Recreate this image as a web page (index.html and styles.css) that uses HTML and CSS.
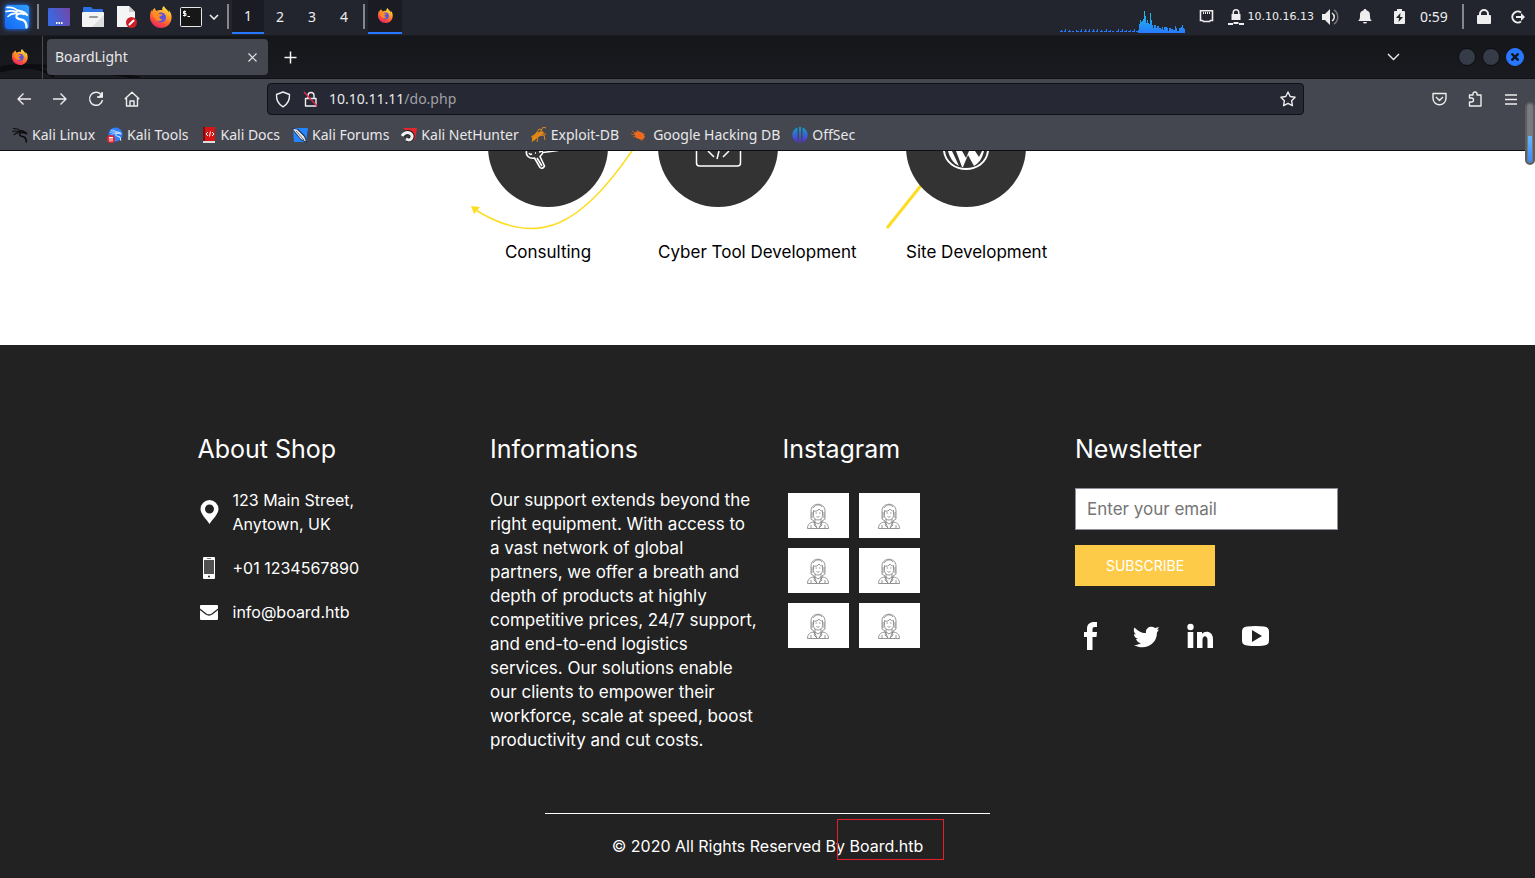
FILE: index.html
```html
<!DOCTYPE html>
<html lang="en">
<head>
<meta charset="utf-8">
<title>BoardLight</title>
<link rel="stylesheet" href="styles.css">
</head>
<body>
<svg class="defs" aria-hidden="true">
  <defs>
    <linearGradient id="fox" x1="0.8" y1="0" x2="0.3" y2="1"><stop offset="0" stop-color="#fff04a"/><stop offset="0.4" stop-color="#ff9a2a"/><stop offset="0.75" stop-color="#ff4a3d"/><stop offset="1" stop-color="#e0246b"/></linearGradient>
    <linearGradient id="blueSquare" x1="0" y1="1" x2="1" y2="0"><stop offset="0" stop-color="#1467f5"/><stop offset="1" stop-color="#2ea0ff"/></linearGradient>
    <linearGradient id="desk" x1="0" y1="0.3" x2="1" y2="0"><stop offset="0" stop-color="#3a68e0"/><stop offset="1" stop-color="#7446a8"/></linearGradient>
    <linearGradient id="load" x1="0" y1="0" x2="0" y2="1"><stop offset="0" stop-color="#1fc4e8"/><stop offset="1" stop-color="#2777ff"/></linearGradient>
    <linearGradient id="off" x1="0" y1="0" x2="0" y2="1"><stop offset="0" stop-color="#12a0c8"/><stop offset="1" stop-color="#5a2bd8"/></linearGradient>
    <symbol id="firefox" viewBox="0 0 22 22">
      <path fill="url(#fox)" d="M14 0c-1.800 1.500-2 3-1.700 4.200C10 3.600 8 4 6.800 5 5.500 4.200 5 3.200 5 2 3.300 2.800 2.400 4 2.200 5.500 1.600 5 1.500 4.500 1.600 3.800.500 6 0 8.500 0 11c0 6 5 11 11 11s10.600-4.700 10.600-10.800c0-3-1-5.200-3-7 .200 1 .100 1.800 0 2.300C17.500 3 14.500 2.500 14 0z"/>
      <circle cx="11" cy="11.500" r="5" fill="#5b55dc"/>
      <path fill="#ff8a24" d="M2.500 8c2-2 5-2 7 0l3 .500c-.600 1.500-2.500 1.500-3 2-.500 1 .500 3 3 2.800-2 2.700-6 2-7.500-.500C3.800 11 3 10 2.500 8z"/>
    </symbol>
    <symbol id="dragon" viewBox="0 0 24 24">
      <g fill="none" stroke="currentColor" stroke-linecap="round" stroke-linejoin="round">
        <path stroke-width="1.600" d="M2 2.500c4-.500 8 .500 11 3.500M1 6.500c4-1 7-1 11 .500M3 11.500c2.500-2.500 5-3.500 9-3"/>
        <path stroke-width="2.200" d="M13 5.500l4 1 3 1.500 2 2M19 9c-4-1.500-8 0-7.500 3 .500 2.500 4 2 6.500 3 2.500 1.200 3.500 4 3.500 7.500"/>
      </g>
    </symbol>
    <symbol id="person" viewBox="0 0 22 26">
      <g fill="none" stroke="#888" stroke-width="0.900">
        <path d="M4 16V8c0-9 14-9 14 0v8l-3 2v2M4 16l3 2v2M6.500 7.500v5c0 6 9 6 9 0v-5M6 8c3 .500 5 0 6-2 1 1.500 2 2 4 2M6 5c3-4 7-4 9-1M5 9v6M17 9v6M8.500 10h1.500M12 10h1.500M9.500 13.500c1 .800 2 .800 3 0M8 16v3l3 2 3-2v-3M.500 25.500c0-4 2.500-6.500 7-6.500l2.500 6.500M21.500 25.500c0-4-2.500-6.500-7-6.500L12 25.500M.500 25.500h21M4 25v-3M18 25v-3M8 19l-1 3 3 3M14 19l1 3-3 3"/>
      </g>
    </symbol>
  </defs>
</svg>

<header class="panel">
  <div class="panel-group">
    <button class="slot" aria-label="Applications"><svg class="menu-logo" width="24" height="24" viewBox="0 0 24 24"><rect width="24" height="24" rx="2" fill="url(#blueSquare)"/><use href="#dragon" width="24" height="24" color="#fff"/></svg></button>
    <span class="sep"></span>
    <button class="slot" aria-label="Show desktop"><svg width="22" height="18"><rect width="22" height="18" rx="1" fill="url(#desk)"/><path stroke="#fff" stroke-width="2" d="M8 15h1.500M10.500 15h1.500M13 15h1.500"/></svg></button>
    <button class="slot" aria-label="Files"><svg width="22" height="20"><path fill="#2b6fe0" d="M1 1q0-1 1-1h7l2 2h9q1 0 1 1v4H1z"/><rect y="5" width="22" height="15" rx="1" fill="#f4f4f4"/><path fill="#dedede" d="M22 8v12H10z"/><path stroke="#999" stroke-width="2" stroke-linecap="round" d="M8 10h7"/></svg></button>
    <button class="slot" aria-label="Text editor"><svg width="20" height="22"><path fill="#f5f5f5" d="M0 0h12l6 6v15H0z"/><path fill="#ccc" d="M12 0v6h6z"/><circle cx="14.500" cy="16.500" r="5.500" fill="#cf1f26"/><path stroke="#fff" stroke-width="2" stroke-linecap="round" d="M12.500 18.500l4-4"/></svg></button>
    <button class="slot" aria-label="Firefox"><svg width="22" height="22"><use href="#firefox"/></svg></button>
    <button class="slot terminal" aria-label="Terminal"><svg width="22" height="20"><rect x="0.500" y="0.500" width="21" height="19" rx="1" fill="#171717" stroke="#e8e8e8"/><path fill="none" stroke="#fff" d="M6 4.500H3.500v2H6v2H3M4.700 3.500v6M7.500 9.500H10"/></svg></button>
    <button class="slot more" aria-label="More terminals"><svg width="10" height="6"><path fill="none" stroke="#eee" stroke-width="1.600" d="M1 1l4 4 4-4"/></svg></button>
    <span class="sep"></span>
    <button class="workspace current">1</button><button class="workspace">2</button><button class="workspace">3</button><button class="workspace">4</button>
    <span class="sep"></span>
    <button class="slot current" aria-label="BoardLight window"><svg width="15" height="15"><use href="#firefox"/></svg></button>
  </div>
  <div class="panel-group">
    <svg class="load" width="125" height="22" viewBox="0 0 125 22"><path stroke="#2777ff" stroke-dasharray="3 1 2 2" d="M0 20.500h78"/><path stroke="#2777ff" d="M1.500 21v-2M5.500 21v-3M9.500 21v-2M16.500 21v-2M21.500 21v-3M25.500 21v-3M29.500 21v-3M33.500 21v-3M37.500 21v-3M41.500 21v-2M46.500 21v-3M50.500 21v-2M58.500 21v-3M62.500 21v-3M66.500 21v-2M70.500 21v-2M74.500 21v-3"/><path fill="url(#load)" d="M78 22v-3h1v-6h1V9h1v2h1v-1h1V8h1V0h1v5h1v7h1V9h1v3h1v1h1V2h1v7h1v5h1v3h1v-3h2v3h1v-2h2v2h2v1h1v-2h1v3h1v-3h3v1h1v3h1v-3h2v1h2v1h2v-4h1v2h1v3h2v-3h2v-1h1v-2h1v3h1v1h1v2h2v-4h1v3h2v4z"/></svg>
    <button class="slot" aria-label="Network"><svg width="15" height="13"><path fill="none" stroke="#eee" stroke-width="1.600" d="M1.500.800h12v9.700h-2l-1 1h-6l-1-1h-2z"/><path stroke="#eee" d="M4.500 2v2M6.500 2v2M8.500 2v2M10.500 2v2"/></svg></button>
    <button class="vpn" aria-label="VPN"><svg width="16" height="16"><path fill="#eee" d="M3.500 5h1V3.500a3.500 3.500 0 0 1 7 0V5h1v6h-9z"/><path fill="#23252e" d="M6 5h4V3.500a2 2 0 0 0-4 0z"/><path stroke="#eee" stroke-width="2" d="M0 15h5M5.500 14h5M11 15h5"/></svg></button>
    <span class="ip">10.10.16.13</span>
    <button class="slot" aria-label="Volume"><svg width="18" height="16"><path fill="#eee" d="M0 5h3l5-5v16l-5-5H0z"/><path fill="none" stroke="#eee" stroke-width="1.500" d="M10 4c3 2 3 6 0 8"/><path fill="none" stroke="#777" stroke-width="1.500" d="M12 1c5 3 5 11 0 14"/></svg></button>
    <button class="slot" aria-label="Notifications"><svg width="14" height="15"><path fill="#eee" d="M7 0c1 0 1.500.600 1.500 1.500C11.500 2 12 4 12 7c0 2.500.500 4 2 5H0c1.500-1 2-2.500 2-5 0-3 .500-5 3.500-5.500C5.500.600 6 0 7 0zM5 13h4q0 1.500-2 1.500T5 13z"/></svg></button>
    <button class="slot" aria-label="Battery"><svg width="11" height="15"><path fill="#eee" d="M3 0h5v2h2q1 0 1 1v11q0 1-1 1H1q-1 0-1-1V3q0-1 1-1h2z"/><path fill="#23252e" d="M6.500 4L2 9h3l-.500 4L9 8H6z"/></svg></button>
    <time class="clock">0:59</time>
    <span class="sep"></span>
    <button class="slot" aria-label="Lock screen"><svg width="14" height="15"><path fill="#eee" d="M1 6h1V5a5 5 0 0 1 10 0v1h1q1 0 1 1v7q0 1-1 1H1q-1 0-1-1V7q0-1 1-1z"/><path fill="#23252e" d="M4 6h6V5a3 3 0 0 0-6 0z"/></svg></button>
    <button class="slot" aria-label="Log out"><svg width="16" height="14"><path fill="none" stroke="#eee" stroke-width="2" d="M11 2.500a5.500 5.500 0 1 0 0 9M6 7h6"/><path fill="#eee" d="M11 3l4 4-4 4z"/></svg></button>
  </div>
</header>

<section class="browser">
  <div class="tabs">
    <svg class="wallpaper" width="140" height="15" viewBox="0 0 140 15"><path fill="none" stroke="#0c0d10" stroke-width="3" d="M0 8Q35-2 54 14M0 5Q30-3 140 15"/></svg>
    <button class="view" aria-label="Firefox View"><svg width="16" height="16"><use href="#firefox"/></svg></button>
    <div class="tab"><span>BoardLight</span><button aria-label="Close tab"><svg width="9" height="9"><path stroke="#e5e5e8" stroke-width="1.200" d="M.500.500l8 8M8.500.500l-8 8"/></svg></button></div>
    <button class="new-tab" aria-label="New tab"><svg width="13" height="13"><path stroke="#f3f3f3" stroke-width="1.500" d="M6.500.500v12M.500 6.500h12"/></svg></button>
    <button class="all-tabs" aria-label="List all tabs"><svg width="13" height="8"><path fill="none" stroke="#eee" stroke-width="1.400" d="M1 1l5.500 5.500L12 1"/></svg></button>
    <div class="window-buttons">
      <button aria-label="Minimize"></button><button aria-label="Maximize"></button>
      <button class="close" aria-label="Close"><svg width="8" height="8"><path stroke="#101522" stroke-width="2.400" d="M.500.500l7 7M7.500.500l-7 7"/></svg></button>
    </div>
  </div>
  <nav class="toolbar">
    <button class="tool" aria-label="Back"><svg width="16" height="14"><path d="M15 7H2M7.500 1.500L2 7l5.500 5.500"/></svg></button>
    <button class="tool" aria-label="Forward"><svg width="16" height="14"><path d="M1 7h13M8.500 1.500L14 7l-5.500 5.500"/></svg></button>
    <button class="tool" aria-label="Reload"><svg width="16" height="16"><path d="M13 3.500A6.500 6.500 0 1 0 14.500 9M14 1v5H9"/><path class="solid" d="M15 1v5.500H9.500z"/></svg></button>
    <button class="tool" aria-label="Home"><svg width="16" height="16"><path d="M.800 8L8 1.200 15.200 8M2.500 7v8h11V7M6 15v-5h4v5"/></svg></button>
    <div class="url">
      <svg width="16" height="17"><path d="M8 1l6.500 2.500c.300 6-1.500 9.500-6.500 12.300C3 13 1.200 9.500 1.500 3.500z"/></svg>
      <svg width="16" height="16"><path d="M2.500 7.500h10.500V15H2.500zM5 7V4.500a3 3 0 0 1 6 0V7"/><path class="strike" d="M1 1l13 14"/></svg>
      <label for="address">10.10.11.11</label><input id="address" value="/do.php">
      <button aria-label="Bookmark this page"><svg width="16" height="16"><path d="M8 1l2.200 4.500 4.900.700-3.500 3.500.800 4.900L8 12.300l-4.400 2.300.800-4.900L.900 6.200l4.900-.700z"/></svg></button>
    </div>
    <button class="tool" aria-label="Save to Pocket"><svg width="15" height="14"><path d="M1 1.500h13V6c0 9-13 9-13 0zM4 5l3.500 3.500L11 5"/></svg></button>
    <button class="tool" aria-label="Extensions"><svg width="15" height="16"><path d="M5 4V3a2 2 0 0 1 4 0v1h4v11H1.500v-4h2a1.500 1.500 0 0 0 0-4h-2V4z"/></svg></button>
    <button class="tool" aria-label="Menu"><svg width="12" height="11"><path d="M0 1h12M0 5.500h12M0 10h12"/></svg></button>
  </nav>
  <nav class="bookmarks">
    <a href="#"><svg width="16" height="16"><use href="#dragon" color="#0b0b0c"/></svg>Kali Linux</a>
    <a href="#"><svg width="16" height="16"><circle cx="8.500" cy="7.500" r="7" fill="#2f7fff"/><use href="#dragon" x="3" y="2" width="12" height="12" color="#cfe4ff"/><circle cx="4" cy="12" r="4" fill="#e3262f"/><path stroke="#fff" d="M2 10.500h4M3 10.500v4M5 10.500v4"/></svg>Kali Tools</a>
    <a href="#"><svg width="16" height="16"><path fill="#ddd" d="M2 14h12v2H2z"/><path fill="#d81414" d="M2 0h12v14H2z"/><path fill="#7c0d12" d="M2 0h2v14H2z"/><path fill="none" stroke="#fff" d="M7 5L5 7l2 2M11 5l2 2-2 2M9.500 4.500l-1 5"/></svg>Kali Docs</a>
    <a href="#"><svg width="16" height="16"><path fill="#2585ff" d="M1 1h15l-2 14H2z"/><path fill="#16233d" d="M0 1l6 1 7 7 2 7-6-3-6-7z"/><path fill="#f1f1f1" d="M1 2l4 .500 7 7 2 5-5-2.500-5-6z"/><path stroke="#444" stroke-width=".800" d="M4 4l8 9"/></svg>Kali Forums</a>
    <a href="#"><svg width="16" height="16"><path fill="#e5262c" d="M2 1h14l-2 12z"/><path fill="none" stroke="#222" stroke-width="5" d="M2 9c4-6 10-3 9 1-1 3-3 3-5 2"/><path fill="none" stroke="#f3f3f3" stroke-width="3" d="M1 9c4-6 11-3 10 1-1 4-4 3-6 2"/></svg>Kali NetHunter</a>
    <a href="#"><svg width="16" height="16"><path fill="#e18718" d="M1 10l4-4 5-2 3 1-2 3-4 2-4 4-2-1z"/><path fill="none" stroke="#e18718" d="M1 15l3-7 4-6 3 1M6 15l1-6 6-1 1 5M8 7l7 0M10 4l2-4 3 1M3 8L0 10"/></svg>Exploit-DB</a>
    <a href="#" class="wide"><svg width="16" height="16"><path fill="#ed6a1e" d="M3 6l4-2 5 2 2 4-3 3-6-2z"/><path stroke="#ed6a1e" stroke-width=".700" d="M1 4l12 8M2 10l12-3M6 3l5 11M0 7l12 2"/></svg>Google Hacking DB</a>
    <a href="#"><svg width="16" height="16"><path fill="url(#off)" d="M5.500.500v15C-1.500 13-1.500 3 5.500.500zM7 0h2v16H7zM10.500.500v15c7-2.500 7-12.500 0-15z"/></svg>OffSec</a>
  </nav>
  <div class="scrollbar"></div>
</section>

<main class="services">
  <article>
    <svg width="120" height="56" viewBox="0 64 120 56"><circle cx="60" cy="60" r="60" fill="#333"/><path fill="none" stroke="#ffdc24" stroke-width="1.500" d="M144 64C94 136 52 164-14 122"/><path fill="#ffdc24" d="M-17 119l9 1-6 7z"/><path fill="none" stroke="#fff" stroke-width="1.600" stroke-linejoin="round" d="M38.500 64c-1 5 3 8 8 7l5.500 9.500q2.500 2 4.500-1.500l-4.500-9.500q2-2 3-4l15-2M41 66q1 2 3 1M47 66h1M51 65l4-1M49 71l5 8"/></svg>
    <h3>Consulting</h3>
  </article>
  <article>
    <svg width="120" height="56" viewBox="0 64 120 56"><circle cx="60" cy="60" r="60" fill="#333"/><path fill="none" stroke="#fff" stroke-width="1.500" d="M38.500 64v12q0 3 3 3h38q3 0 3-3V64M50 64l6 6M71 64l-6 6M61 64l-2 8"/></svg>
    <h3>Cyber Tool Development</h3>
  </article>
  <article>
    <svg width="120" height="56" viewBox="0 64 120 56"><path stroke="#ffdc24" stroke-width="3" d="M-19 141L17 96"/><circle cx="60" cy="60" r="60" fill="#333"/><path fill="none" stroke="#fff" stroke-width="2" d="M38 64c3 24 41 24 44 0"/><path fill="#fff" d="M42 64h4l7 15c-6-3-9-8-11-15zM50 64h6l4 7 3-7h6l4 6 3-6h2c-2 8-5 12-10 15l-6-11-5 12-1 0z"/></svg>
    <h3>Site Development</h3>
  </article>
</main>

<footer class="footer">
  <div class="columns">
    <section>
      <h2>About Shop</h2>
      <address class="contacts">
        <div><svg width="24" height="24"><path fill="#fff" fill-rule="evenodd" d="M11.500 0a9 9 0 0 1 9 9c0 5-5 9-9 15C7.500 18 2.500 14 2.500 9a9 9 0 0 1 9-9zm0 4.500a4.500 4.500 0 1 0 0 9 4.500 4.500 0 0 0 0-9z"/></svg><span>123 Main Street,<br>Anytown, UK</span></div>
        <div><svg width="24" height="24"><rect x="5" y="1" width="12" height="22" rx="1" fill="#fff"/><path fill="#505050" d="M6 4h10v14H6z"/><path stroke="#777" d="M9 2.500h4"/><circle cx="11" cy="20.500" r="1" fill="#222"/></svg><span>+01 1234567890</span></div>
        <div><svg width="24" height="24"><rect x="2" y="5" width="18" height="15" rx="1" fill="#fff"/><path fill="none" stroke="#222" stroke-width="1.300" d="M1 8.500l7 5.500q3 2 6 0l7-5.500"/></svg><span>info@board.htb</span></div>
      </address>
    </section>
    <section>
      <h2>Informations</h2>
      <p>Our support extends beyond the<br>right equipment. With access to<br>a vast network of global<br>partners, we offer a breath and<br>depth of products at highly<br>competitive prices, 24/7 support,<br>and end-to-end logistics<br>services. Our solutions enable<br>our clients to empower their<br>workforce, scale at speed, boost<br>productivity and cut costs.</p>
    </section>
    <section>
      <h2>Instagram</h2>
      <div class="photos">
        <div><svg width="22" height="26"><use href="#person"/></svg></div><div><svg width="22" height="26"><use href="#person"/></svg></div>
        <div><svg width="22" height="26"><use href="#person"/></svg></div><div><svg width="22" height="26"><use href="#person"/></svg></div>
        <div><svg width="22" height="26"><use href="#person"/></svg></div><div><svg width="22" height="26"><use href="#person"/></svg></div>
      </div>
    </section>
    <section>
      <h2>Newsletter</h2>
      <form><input type="email" aria-label="Email" placeholder="Enter your email"><button type="button">SUBSCRIBE</button></form>
      <div class="social">
        <a href="#" aria-label="Facebook"><svg width="28" height="28"><path fill="#fff" d="M10 28V15H7v-5h3V7c0-5 3-7 7-7h3v5h-2c-2 0-2.500.800-2.500 2.500V10H20l-.500 5h-4v13z"/></svg></a>
        <a href="#" aria-label="Twitter"><svg width="28" height="28"><path fill="#fff" d="M2 23c3 0 5-.500 7-2-3 0-4-2-5-4h2c-3-1-4-3-4-5l2 .500C2 11 1 8 2.500 5.500 6 9 9 11 14 11c-1-5 5-8 9-5l4-1-2 3 2-.500-2 3C25 23 12 29 2 23z"/></svg></a>
        <a href="#" aria-label="LinkedIn"><svg width="28" height="28"><circle cx="3.500" cy="5" r="3.200" fill="#fff"/><path fill="#fff" d="M.700 10h5.600v16H.700zM10 10h5v2c3-4 11-3 11 5v9h-5.500v-8c0-5-5-5-5 0v8H10z"/></svg></a>
        <a href="#" aria-label="YouTube"><svg width="28" height="28"><path fill="#fff" fill-rule="evenodd" d="M5 4.500q9-1 17 0 5 .500 5 5v9q0 4.500-5 5-8 1-17 0-5-.500-5-5v-9q0-4.500 5-5zM10 8v12l10-6z"/></svg></a>
      </div>
    </section>
  </div>
  <div class="copyright">© 2020 All Rights Reserved By <span class="owner">Board.htb</span></div>
</footer>
</body>
</html>
```
FILE: styles.css
```css
*, *::after { box-sizing: border-box; }
body { margin: 0; min-height: 100vh; display: flex; flex-direction: column; background: #fff; font-family: Inter, "Noto Sans", sans-serif; font-size: 16px; line-height: 24px; }
button { padding: 0; border: 0; background: none; color: inherit; font: inherit; display: flex; align-items: center; justify-content: center; }
svg { display: block; flex: none; }
.defs { position: absolute; width: 0; height: 0; }

.panel { display: flex; justify-content: space-between; height: 36px; padding-bottom: 2px; background: #23252e; border-bottom: 1px solid #1b1c23; color: #eee; font: 14px/20px "Noto Sans", sans-serif; }
.panel-group { display: flex; align-items: center; }
.slot { width: 34px; height: 34px; }
.menu-logo { border-radius: 2px; box-shadow: 0 0 5px #2777ff; }
.terminal { width: 26px; }
.more { width: 20px; }
.sep { width: 2px; height: 25px; margin: 0 3px; background: #85868a; }
.workspace { width: 32px; height: 34px; }
.current { background: #1b1c23; border-bottom: 2px solid #2777ff; }
.load { align-self: flex-end; margin-right: 5px; }
.vpn { width: 24px; height: 34px; }
.ip { font: 11px/20px "DejaVu Sans", sans-serif; }
.clock { width: 43px; padding-left: 4px; }

.browser { position: relative; color: #e8e8ea; font: 14px/20px "Noto Sans", sans-serif; }
.tabs { position: relative; display: flex; align-items: center; height: 43px; background: linear-gradient(#15161a, #1a1b20); border-bottom: 1px solid #111216; }
.wallpaper { position: absolute; left: 0; bottom: 0; }
.view { position: relative; width: 43px; height: 43px; padding-right: 3px; border-right: 1px solid #4b4c50; }
.tab { position: relative; display: flex; align-items: center; justify-content: space-between; width: 221px; height: 36px; margin-left: 4px; padding: 0 4px 0 8px; border-radius: 4px; background: #44474f; }
.tab button { width: 24px; height: 24px; }
.new-tab { width: 36px; height: 36px; margin-left: 4px; }
.all-tabs { width: 36px; height: 36px; margin-left: auto; margin-right: 47px; }
.window-buttons { display: flex; gap: 6px; margin-right: 11px; }
.window-buttons button { width: 18px; height: 18px; border: 1px solid #0b0c0f; border-radius: 50%; background: #363b48; }
.window-buttons .close { border-color: #2777ff; background: #2777ff; }
.toolbar { display: flex; align-items: center; height: 40px; padding: 0 6px; background: #44474f; }
.tool { width: 36px; height: 36px; }
.toolbar path { fill: none; stroke: #eeeeef; stroke-width: 1.4; stroke-linejoin: round; }
.toolbar .solid { fill: #eeeeef; stroke: none; }
.toolbar .strike { stroke: #e22850; }
.url { flex: 1; display: flex; align-items: center; height: 32px; margin: 0 117px; padding: 0 7px; border: 1px solid #111218; border-radius: 4px; background: #262833; }
.url svg + svg { margin: 0 10px 0 12px; }
.url input { flex: 1; min-width: 0; padding: 0; border: 0; background: none; color: #a0a1a7; font: inherit; }
.bookmarks { display: flex; gap: 12px; height: 32px; padding: 0 12px; background: #44474f; border-bottom: 1px solid #0e0f13; }
.bookmarks a { display: flex; align-items: center; gap: 4px; color: inherit; text-decoration: none; white-space: nowrap; }
.bookmarks .wide { gap: 6px; }
.scrollbar { position: absolute; right: 0; bottom: -14px; width: 10px; height: 63px; border: 2px solid #5c5e62; border-radius: 5px; background: linear-gradient(#7b7c81 55%, #63b7fa 55%, #3d86fb); box-shadow: inset 0 0 0 1px #77797e; }

.services { display: grid; grid-template-columns: 120px 198px 141px; justify-content: center; gap: 50px; height: 194px; color: #000; font-size: 17px; }
.services svg { overflow: visible; }
.services h3 { margin: 33px 0 0; font-size: inherit; font-weight: 400; white-space: nowrap; }
.services article:first-child h3 { text-align: center; }

.footer { flex: 1; padding-top: 90px; background: #222; color: #fff; }
.columns { display: grid; grid-template-columns: repeat(4, minmax(0, 1fr)); gap: 30px; max-width: 1140px; margin: 0 auto; }
h2 { margin: 0 0 24px; font-size: 25px; line-height: 29px; font-weight: 400; }
.contacts { display: grid; gap: 20px; font-style: normal; }
.contacts div { display: flex; align-items: center; gap: 11px; }
p { margin: 0; font-size: 17px; white-space: nowrap; }
.photos { display: grid; grid-template-columns: 61px 61px; gap: 10px; padding: 5px; }
.photos div { display: flex; align-items: center; justify-content: center; height: 45px; background: #fff; }
form input { width: 100%; height: 42px; margin-bottom: 15px; padding: 0 11px; border: 1px solid #8f8f9d; border-radius: 0; background: #fff; font: inherit; font-size: 17px; }
form input::placeholder { color: #757575; }
form button { width: 140px; height: 41px; background: #fdcb48; color: #fff; font-size: 14px; }
.social { display: flex; gap: 27px; padding: 36px 2px 0; }
.copyright { width: 445px; margin: 61px auto 0; padding: 20px 0; border-top: 1px solid #fff; text-align: center; }
.owner { position: relative; }
.owner::after { content: ""; position: absolute; left: -12px; top: -17px; width: 107px; height: 41px; border: 1px solid #e3202c; }
```
